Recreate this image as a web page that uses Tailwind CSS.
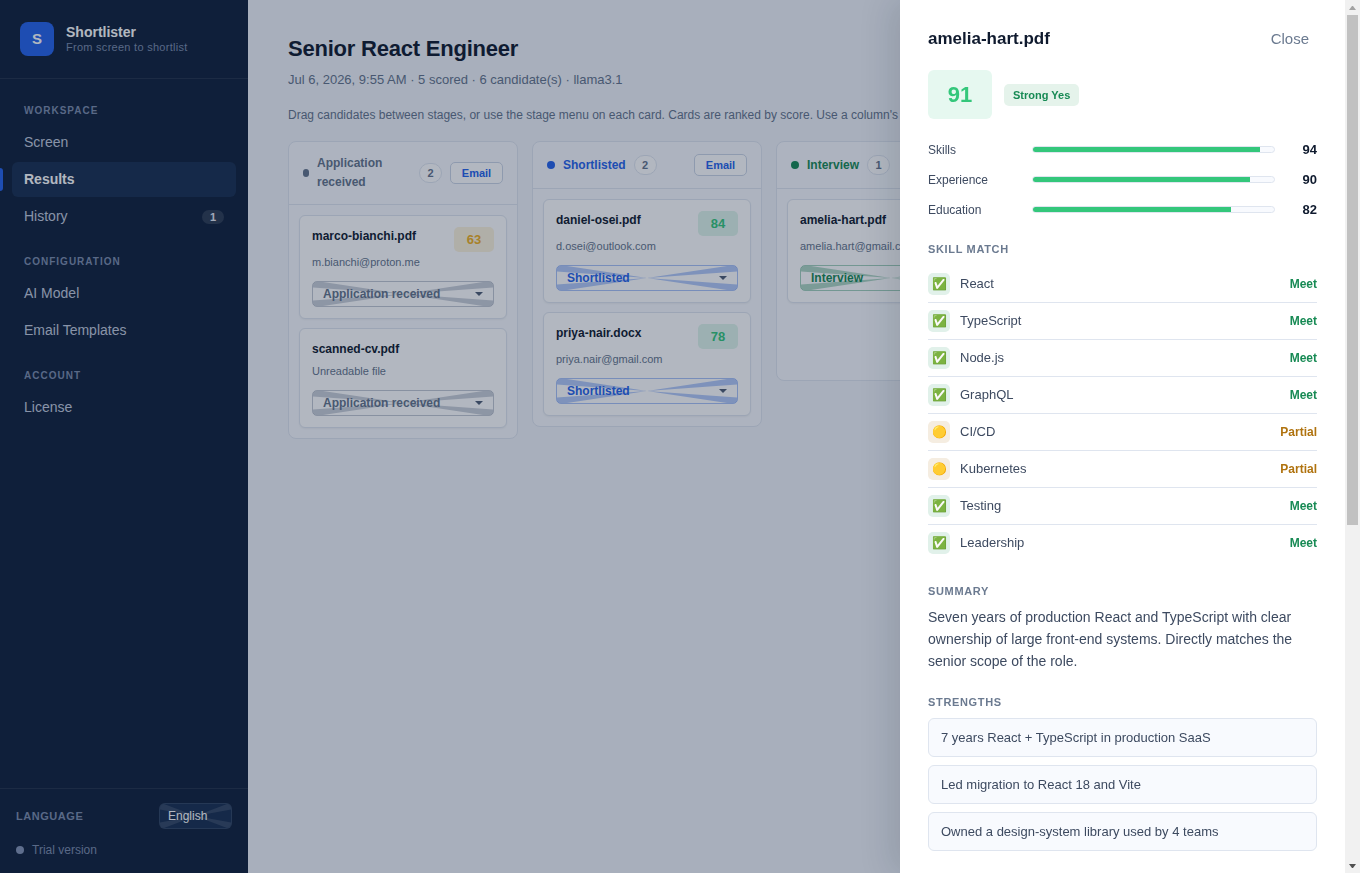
<!DOCTYPE html>
<html lang="en">
<head>
  <meta charset="UTF-8" />
  <meta name="viewport" content="width=device-width, initial-scale=1" />
  <title>Shortlister - Results</title>
  <script src="https://cdn.jsdelivr.net/npm/@tailwindcss/browser@4"></script>
</head>
<body class="h-screen overflow-hidden flex bg-[#f0f3f9] font-['Liberation_Sans',Arial,sans-serif] text-[#0f1a2e]">

  <!-- Wedge pattern shared by every select -->
  <svg class="hidden">
    <symbol id="wedges" viewBox="0 0 180 26" preserveAspectRatio="none">
      <path d="M0 0H10L90 13L0 6ZM180 0H170L90 13L180 6ZM0 26H10L90 13L0 20ZM180 26H170L90 13L180 20Z" />
    </symbol>
  </svg>

  <aside class="w-[248px] shrink-0 h-full flex flex-col bg-[#10203a]">
    <div class="flex items-center gap-3 px-5 py-[22px] border-b border-white/8">
      <div class="size-[34px] rounded-lg bg-[#2563eb] text-white text-[15px] font-bold flex items-center justify-center">S</div>
      <div>
        <div class="text-sm leading-4 font-bold text-white">Shortlister</div>
        <div class="text-[11px] leading-[14px] tracking-wide text-[#7c8cab]">From screen to shortlist</div>
      </div>
    </div>

    <nav class="flex-1 px-3 pt-6 flex flex-col gap-5">
      <div>
        <h2 class="px-3 mb-[6px] text-[10px] leading-4 font-bold tracking-widest text-[#7c8cab]">WORKSPACE</h2>
        <div class="flex flex-col gap-[2px]">
          <a href="#" class="flex items-center h-[35px] px-3 rounded-md text-[14px] text-[#c2cbdd]">Screen</a>
          <a href="#" aria-current="page" class="relative flex items-center h-[35px] px-3 rounded-md text-[14px] font-bold text-white bg-[#192f50]">
            <span class="absolute -left-3 top-[6px] w-[3px] h-[23px] rounded-r-sm bg-[#2563eb]"></span>
            Results
          </a>
          <a href="#" class="flex items-center justify-between h-[35px] px-3 rounded-md text-[14px] text-[#c2cbdd]">
            History
            <span class="w-[22px] h-[14px] rounded-full bg-white/12 text-[11px] leading-[14px] font-bold text-center text-[#e6ebf5]">1</span>
          </a>
        </div>
      </div>
      <div>
        <h2 class="px-3 mb-[6px] text-[10px] leading-4 font-bold tracking-widest text-[#7c8cab]">CONFIGURATION</h2>
        <div class="flex flex-col gap-[2px]">
          <a href="#" class="flex items-center h-[35px] px-3 rounded-md text-[14px] text-[#c2cbdd]">AI Model</a>
          <a href="#" class="flex items-center h-[35px] px-3 rounded-md text-[14px] text-[#c2cbdd]">Email Templates</a>
        </div>
      </div>
      <div>
        <h2 class="px-3 mb-[6px] text-[10px] leading-4 font-bold tracking-widest text-[#7c8cab]">ACCOUNT</h2>
        <a href="#" class="flex items-center h-[35px] px-3 rounded-md text-[14px] text-[#c2cbdd]">License</a>
      </div>
    </nav>

    <div class="px-4 py-[14px] border-t border-white/8">
      <div class="flex items-center justify-between">
        <label for="language" class="text-[11px] font-bold tracking-wider text-[#7c8cab]">LANGUAGE</label>
        <div class="relative w-[73px] h-[26px] rounded-md border border-white/10 bg-[#192f50] overflow-hidden">
          <svg class="absolute inset-0 size-full fill-white/12"><use href="#wedges" /></svg>
          <select id="language" class="relative block size-full appearance-none pl-2 text-xs text-white">
            <option>English</option>
          </select>
        </div>
      </div>
      <div class="mt-3 flex items-center gap-2 text-xs leading-[18px] text-[#7c8cab]">
        <span class="size-2 rounded-full bg-[#8494b4]"></span>
        Trial version
      </div>
    </div>
  </aside>

  <main class="flex-1 min-w-0 px-10 pt-[35px] overflow-hidden">
    <h1 class="text-[22px] leading-7 font-bold tracking-[-0.01em]">Senior React Engineer</h1>
    <p class="mt-[7px] text-[13px] leading-5 text-[#64748b]">Jul 6, 2026, 9:55 AM · 5 scored · 6 candidate(s) · llama3.1</p>
    <p class="mt-[15px] text-xs leading-5 text-[#64748b] whitespace-nowrap">Drag candidates between stages, or use the stage menu on each card. Cards are ranked by score. Use a column's Email button to contact everyone in it.</p>

    <div class="mt-4 flex items-start gap-[14px]">

      <section class="w-[230px] shrink-0 min-h-[240px] rounded-lg border border-[#dfe5ef] bg-[#f8fafe]">
        <div class="flex items-center justify-between gap-2 px-[14px] py-3 border-b border-[#dfe5ef]">
          <div class="flex items-center gap-2 text-[#64748b]">
            <span class="w-[6px] h-2 shrink-0 rounded-full bg-current"></span>
            <h3 class="flex-1 text-xs leading-[19px] font-bold">Application received</h3>
            <span class="w-[23px] h-5 shrink-0 rounded-full border border-[#dfe5ef] bg-white text-[11px] leading-[18px] font-bold text-center">2</span>
          </div>
          <button type="button" class="w-[53px] h-[22px] shrink-0 rounded-[5px] border border-[#cbd5e5] bg-white text-[11px] font-bold text-[#2563eb]">Email</button>
        </div>
        <div class="p-[10px] flex flex-col gap-[9px]">
          <article class="px-3 py-[11px] rounded-md border border-[#dfe5ef] bg-white shadow-xs">
            <div class="flex items-start justify-between">
              <h4 class="text-xs leading-[19px] font-bold">marco-bianchi.pdf</h4>
              <span class="w-10 h-[25px] rounded-[5px] bg-[#fdf3dc] text-[13px] leading-[25px] font-bold text-center text-[#f0b020]">63</span>
            </div>
            <p class="mt-[2px] text-[11px] leading-[17px] text-[#64748b]">m.bianchi@proton.me</p>
            <div class="relative mt-[10px] h-[26px] rounded-[5px] border border-[#64748b]/40 overflow-hidden text-[#64748b]">
              <svg class="absolute inset-0 size-full fill-[#64748b]/35"><use href="#wedges" /></svg>
              <select aria-label="Stage of marco-bianchi.pdf" class="relative block size-full appearance-none pl-[10px] text-xs font-bold">
                <option>Application received</option>
              </select>
              <svg class="absolute right-[10px] top-[10px] w-2 h-1 fill-[#4f5d75] pointer-events-none" viewBox="0 0 8 4"><path d="M0 0H8L4 4Z" /></svg>
            </div>
          </article>
          <article class="px-3 py-[11px] rounded-md border border-[#dfe5ef] bg-white shadow-xs">
            <h4 class="text-xs leading-[19px] font-bold">scanned-cv.pdf</h4>
            <p class="mt-1 text-[11px] leading-[17px] text-[#64748b]">Unreadable file</p>
            <div class="relative mt-[10px] h-[26px] rounded-[5px] border border-[#64748b]/40 overflow-hidden text-[#64748b]">
              <svg class="absolute inset-0 size-full fill-[#64748b]/35"><use href="#wedges" /></svg>
              <select aria-label="Stage of scanned-cv.pdf" class="relative block size-full appearance-none pl-[10px] text-xs font-bold">
                <option>Application received</option>
              </select>
              <svg class="absolute right-[10px] top-[10px] w-2 h-1 fill-[#4f5d75] pointer-events-none" viewBox="0 0 8 4"><path d="M0 0H8L4 4Z" /></svg>
            </div>
          </article>
        </div>
      </section>

      <section class="w-[230px] shrink-0 min-h-[240px] rounded-lg border border-[#dfe5ef] bg-[#f8fafe]">
        <div class="flex items-center justify-between gap-2 px-[14px] py-3 border-b border-[#dfe5ef]">
          <div class="flex items-center gap-2 text-[#2563eb]">
            <span class="size-2 shrink-0 rounded-full bg-current"></span>
            <h3 class="text-xs leading-[19px] font-bold">Shortlisted</h3>
            <span class="w-[23px] h-5 shrink-0 rounded-full border border-[#dfe5ef] bg-white text-[11px] leading-[18px] font-bold text-center text-[#64748b]">2</span>
          </div>
          <button type="button" class="w-[53px] h-[22px] shrink-0 rounded-[5px] border border-[#cbd5e5] bg-white text-[11px] font-bold text-[#2563eb]">Email</button>
        </div>
        <div class="p-[10px] flex flex-col gap-[9px]">
          <article class="px-3 py-[11px] rounded-md border border-[#dfe5ef] bg-white shadow-xs">
            <div class="flex items-start justify-between">
              <h4 class="text-xs leading-[19px] font-bold">daniel-osei.pdf</h4>
              <span class="w-10 h-[25px] rounded-[5px] bg-[#dff5ea] text-[13px] leading-[25px] font-bold text-center text-[#34c77b]">84</span>
            </div>
            <p class="mt-[2px] text-[11px] leading-[17px] text-[#64748b]">d.osei@outlook.com</p>
            <div class="relative mt-[10px] h-[26px] rounded-[5px] border border-[#2563eb]/40 overflow-hidden text-[#2563eb]">
              <svg class="absolute inset-0 size-full fill-[#2563eb]/35"><use href="#wedges" /></svg>
              <select aria-label="Stage of daniel-osei.pdf" class="relative block size-full appearance-none pl-[10px] text-xs font-bold">
                <option>Shortlisted</option>
              </select>
              <svg class="absolute right-[10px] top-[10px] w-2 h-1 fill-[#4f5d75] pointer-events-none" viewBox="0 0 8 4"><path d="M0 0H8L4 4Z" /></svg>
            </div>
          </article>
          <article class="px-3 py-[11px] rounded-md border border-[#dfe5ef] bg-white shadow-xs">
            <div class="flex items-start justify-between">
              <h4 class="text-xs leading-[19px] font-bold">priya-nair.docx</h4>
              <span class="w-10 h-[25px] rounded-[5px] bg-[#dff5ea] text-[13px] leading-[25px] font-bold text-center text-[#34c77b]">78</span>
            </div>
            <p class="mt-[2px] text-[11px] leading-[17px] text-[#64748b]">priya.nair@gmail.com</p>
            <div class="relative mt-[10px] h-[26px] rounded-[5px] border border-[#2563eb]/40 overflow-hidden text-[#2563eb]">
              <svg class="absolute inset-0 size-full fill-[#2563eb]/35"><use href="#wedges" /></svg>
              <select aria-label="Stage of priya-nair.docx" class="relative block size-full appearance-none pl-[10px] text-xs font-bold">
                <option>Shortlisted</option>
              </select>
              <svg class="absolute right-[10px] top-[10px] w-2 h-1 fill-[#4f5d75] pointer-events-none" viewBox="0 0 8 4"><path d="M0 0H8L4 4Z" /></svg>
            </div>
          </article>
        </div>
      </section>

      <section class="w-[230px] shrink-0 min-h-[240px] rounded-lg border border-[#dfe5ef] bg-[#f8fafe]">
        <div class="flex items-center justify-between gap-2 px-[14px] py-3 border-b border-[#dfe5ef]">
          <div class="flex items-center gap-2 text-[#178a54]">
            <span class="size-2 shrink-0 rounded-full bg-current"></span>
            <h3 class="text-xs leading-[19px] font-bold">Interview</h3>
            <span class="w-[23px] h-5 shrink-0 rounded-full border border-[#dfe5ef] bg-white text-[11px] leading-[18px] font-bold text-center text-[#64748b]">1</span>
          </div>
          <button type="button" class="w-[53px] h-[22px] shrink-0 rounded-[5px] border border-[#cbd5e5] bg-white text-[11px] font-bold text-[#2563eb]">Email</button>
        </div>
        <div class="p-[10px] flex flex-col gap-[9px]">
          <article class="px-3 py-[11px] rounded-md border border-[#dfe5ef] bg-white shadow-xs">
            <div class="flex items-start justify-between">
              <h4 class="text-xs leading-[19px] font-bold">amelia-hart.pdf</h4>
              <span class="w-10 h-[25px] rounded-[5px] bg-[#dff5ea] text-[13px] leading-[25px] font-bold text-center text-[#34c77b]">91</span>
            </div>
            <p class="mt-[2px] text-[11px] leading-[17px] text-[#64748b]">amelia.hart@gmail.com</p>
            <div class="relative mt-[10px] h-[26px] rounded-[5px] border border-[#178a54]/40 overflow-hidden text-[#178a54]">
              <svg class="absolute inset-0 size-full fill-[#178a54]/35"><use href="#wedges" /></svg>
              <select aria-label="Stage of amelia-hart.pdf" class="relative block size-full appearance-none pl-[10px] text-xs font-bold">
                <option>Interview</option>
              </select>
              <svg class="absolute right-[10px] top-[10px] w-2 h-1 fill-[#4f5d75] pointer-events-none" viewBox="0 0 8 4"><path d="M0 0H8L4 4Z" /></svg>
            </div>
          </article>
        </div>
      </section>
    </div>
  </main>

  <div class="fixed inset-0 bg-[#0f1f3a]/32"></div>

  <!-- Candidate drawer -->
  <div role="dialog" aria-labelledby="drawerTitle" class="fixed inset-y-0 right-0 w-[460px] flex bg-white shadow-[-8px_0_32px_rgba(15,26,46,0.14)]">
    <div class="flex-1 min-w-0 overflow-y-auto px-7 py-6">
      <div class="flex items-center justify-between h-[30px]">
        <h2 id="drawerTitle" class="text-[17px] font-bold">amelia-hart.pdf</h2>
        <button type="button" class="px-2 text-[15px] leading-5 text-[#6b7a90]">Close</button>
      </div>

      <div class="mt-4 flex items-center gap-3">
        <div class="w-16 h-[49px] rounded-md bg-[#e6f8f0] text-[22px] leading-[49px] font-bold text-center text-[#34c77b]">91</div>
        <span class="px-[9px] rounded-[5px] bg-[#e5f3eb] text-[11px] leading-[22px] font-bold text-[#178a54]">Strong Yes</span>
      </div>

      <div class="mt-5 flex flex-col gap-[9px]">
        <div class="flex items-center gap-[14px] h-[21px]">
          <span class="w-[90px] text-xs text-[#3d4a60]">Skills</span>
          <div class="flex-1 h-[7px] rounded-full border border-[#dfe5ef] bg-[#f8fafe] overflow-hidden"><div class="h-full bg-[#34c77b]" style="width: 94%"></div></div>
          <span class="w-7 text-[13px] font-bold text-right">94</span>
        </div>
        <div class="flex items-center gap-[14px] h-[21px]">
          <span class="w-[90px] text-xs text-[#3d4a60]">Experience</span>
          <div class="flex-1 h-[7px] rounded-full border border-[#dfe5ef] bg-[#f8fafe] overflow-hidden"><div class="h-full bg-[#34c77b]" style="width: 90%"></div></div>
          <span class="w-7 text-[13px] font-bold text-right">90</span>
        </div>
        <div class="flex items-center gap-[14px] h-[21px]">
          <span class="w-[90px] text-xs text-[#3d4a60]">Education</span>
          <div class="flex-1 h-[7px] rounded-full border border-[#dfe5ef] bg-[#f8fafe] overflow-hidden"><div class="h-full bg-[#34c77b]" style="width: 82%"></div></div>
          <span class="w-7 text-[13px] font-bold text-right">82</span>
        </div>
      </div>

      <h3 class="mt-[21px] text-[11px] leading-4 font-bold tracking-[0.06em] text-[#6b7a90]">SKILL MATCH</h3>
      <ul class="mt-[9px] divide-y divide-[#dfe5ef] text-[13px] text-[#3d4a60]">
        <li class="flex items-center gap-[10px] py-[7px]">
          <span class="flex justify-center size-[22px] rounded-[5px] bg-[#e1f1ea] text-xs leading-[22px]">✅</span>
          <span class="flex-1">React</span><span class="text-xs font-bold text-[#178a54]">Meet</span>
        </li>
        <li class="flex items-center gap-[10px] py-[7px]">
          <span class="flex justify-center size-[22px] rounded-[5px] bg-[#e1f1ea] text-xs leading-[22px]">✅</span>
          <span class="flex-1">TypeScript</span><span class="text-xs font-bold text-[#178a54]">Meet</span>
        </li>
        <li class="flex items-center gap-[10px] py-[7px]">
          <span class="flex justify-center size-[22px] rounded-[5px] bg-[#e1f1ea] text-xs leading-[22px]">✅</span>
          <span class="flex-1">Node.js</span><span class="text-xs font-bold text-[#178a54]">Meet</span>
        </li>
        <li class="flex items-center gap-[10px] py-[7px]">
          <span class="flex justify-center size-[22px] rounded-[5px] bg-[#e1f1ea] text-xs leading-[22px]">✅</span>
          <span class="flex-1">GraphQL</span><span class="text-xs font-bold text-[#178a54]">Meet</span>
        </li>
        <li class="flex items-center gap-[10px] py-[7px]">
          <span class="flex justify-center size-[22px] rounded-[5px] bg-[#f5ede1] text-xs leading-[22px]">🟡</span>
          <span class="flex-1">CI/CD</span><span class="text-xs font-bold text-[#b0730f]">Partial</span>
        </li>
        <li class="flex items-center gap-[10px] py-[7px]">
          <span class="flex justify-center size-[22px] rounded-[5px] bg-[#f5ede1] text-xs leading-[22px]">🟡</span>
          <span class="flex-1">Kubernetes</span><span class="text-xs font-bold text-[#b0730f]">Partial</span>
        </li>
        <li class="flex items-center gap-[10px] py-[7px]">
          <span class="flex justify-center size-[22px] rounded-[5px] bg-[#e1f1ea] text-xs leading-[22px]">✅</span>
          <span class="flex-1">Testing</span><span class="text-xs font-bold text-[#178a54]">Meet</span>
        </li>
        <li class="flex items-center gap-[10px] py-[7px]">
          <span class="flex justify-center size-[22px] rounded-[5px] bg-[#e1f1ea] text-xs leading-[22px]">✅</span>
          <span class="flex-1">Leadership</span><span class="text-xs font-bold text-[#178a54]">Meet</span>
        </li>
      </ul>

      <h3 class="mt-[22px] text-[11px] leading-4 font-bold tracking-[0.06em] text-[#6b7a90]">SUMMARY</h3>
      <p class="mt-[7px] text-[14px] leading-[22px] text-[#3d4a60]">Seven years of production React and TypeScript with clear ownership of large front-end systems. Directly matches the senior scope of the role.</p>

      <h3 class="mt-[22px] text-[11px] leading-4 font-bold tracking-[0.06em] text-[#6b7a90]">STRENGTHS</h3>
      <ul class="mt-2 flex flex-col gap-2 text-[13px] leading-[19px] text-[#3d4a60]">
        <li class="px-3 py-[9px] rounded-md border border-[#dfe5ef] bg-[#f8fafe]">7 years React + TypeScript in production SaaS</li>
        <li class="px-3 py-[9px] rounded-md border border-[#dfe5ef] bg-[#f8fafe]">Led migration to React 18 and Vite</li>
        <li class="px-3 py-[9px] rounded-md border border-[#dfe5ef] bg-[#f8fafe]">Owned a design-system library used by 4 teams</li>
      </ul>
    </div>

    <!-- Scrollbar -->
    <div aria-hidden="true" class="w-[15px] shrink-0 flex flex-col items-center bg-[#f1f1f1]">
      <div class="h-[15px] flex items-center"><svg class="w-[7px] h-1 fill-[#a3a3a3]" viewBox="0 0 7 4"><path d="M0 4H7L4 0H3Z" /></svg></div>
      <div class="flex-1 w-[11px]"><div class="h-[510px] bg-[#c1c1c1]"></div></div>
      <div class="h-[15px] flex items-center"><svg class="w-[7px] h-1 fill-[#505050]" viewBox="0 0 7 4"><path d="M0 0H7L4 4H3Z" /></svg></div>
    </div>
  </div>

</body>
</html>
